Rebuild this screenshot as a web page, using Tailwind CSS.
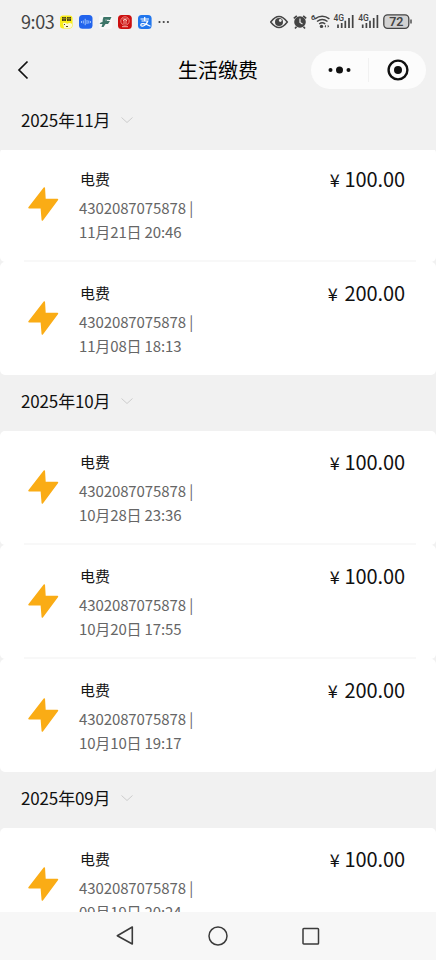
<!DOCTYPE html>
<html lang="zh-CN">
<head>
<meta charset="utf-8">
<title>生活缴费</title>
<script src="https://cdn.jsdelivr.net/npm/@tailwindcss/browser@4"></script>
</head>
<body class="h-[960px] w-[436px] overflow-hidden bg-[#f1f1f1] font-['Noto_Sans_CJK_SC',sans-serif] text-[#111]">
<div class="flex h-[960px] flex-col">
  <header class="shrink-0">
    <div class="flex h-11 items-center justify-between pl-[21px] pr-[23px]">
      <div class="flex items-center">
        <span class="w-[35px] whitespace-nowrap pb-[2px] text-[18px] leading-5 tracking-[-0.4px] text-[#444]">9:03</span>
        <svg class="ml-1 block" width="110" height="14" viewBox="0 0 110 14">
          <rect x="0" y="0.5" width="12.5" height="13" rx="3" fill="#f9ed19"/>
          <path d="M2 2h4v4H2zM7 2h4v4H7z" fill="#494319"/><path d="M2 3.5h9M4 2v4M9 2v4" stroke="#a89b21" stroke-width=".6"/>
          <path d="M3 8q3-1 4 1 3-2 5 0v2q0 2-2 2H4z" fill="#fffbd5"/><path d="M4.5 9v1M6 11.5h2" stroke="#514722"/>
          <rect x="19" y="0" width="13.5" height="13.8" rx="3.5" fill="#2264ed"/>
          <path d="M21.5 6v2M23.3 5.5v3M25.2 3.8v6.400M27 5v4M28.8 5.500v3M30.500 6v2" stroke="#b9d7ff" stroke-width=".8"/>
          <rect x="39" y="0" width="13.5" height="14" rx="3" fill="#f8f8f8"/>
          <path d="M43.500 2h8l-1.500 3h-3v1h3l-2 3h-2.500l-2 3h-2l1-3h-3q1-2 3-2 0-3 1-5z" fill="#3d7568"/><path d="M45 5h4" stroke="#b7d0c9" stroke-width=".6"/>
          <rect x="58" y="0" width="13.8" height="14" rx="3.5" fill="#cc1010"/>
          <circle cx="65" cy="6" r="4.2" fill="none" stroke="#f3a29a" stroke-width=".8"/><path d="M62.5 4h5M63 6l2-2 2 2M64 5v4M66 5v4M62 11.7h6" stroke="#ffd4cc" stroke-width=".8" fill="none"/>
          <rect x="78" y="0" width="13.6" height="14" rx="3.5" fill="#2176ed"/>
          <path d="M80.5 4h8.5M84.7 2v4M81.5 6h6.3q-1.5 4-4.5 5-2.5.6-2.5-1t2.5-1.3q2.700.4 7.200 2.500" stroke="#fff" stroke-width="1.2" fill="none"/>
          <g fill="#444"><circle cx="99.5" cy="7" r="1.1"/><circle cx="103.7" cy="7" r="1.1"/><circle cx="107.9" cy="7" r="1.1"/></g>
        </svg>
      </div>
      <svg class="block" width="143" height="20" viewBox="270 12 143 20" fill="none" stroke="#444">
        <path d="M270.7 22q8.3-11 16.6 0-8.3 11-16.6 0z" stroke-width="1.5"/><circle cx="279" cy="22" r="4" fill="#444" stroke="none"/><circle cx="280.3" cy="20.5" r="1.4" fill="#eee" stroke="none"/>
        <circle cx="300" cy="22" r="5.8" fill="#444" stroke="none"/><path d="M293.8 18.4l3-2.6M306.2 18.4l-3-2.6M296.500 26.8l-1.500 1.800M303.500 26.8l1.500 1.800" stroke-width="1.6"/><path d="M300 18.5v4l2.5 1.4" stroke="#eee" stroke-width="1.2"/>
        <text x="311" y="20" font-family="Roboto,sans-serif" font-size="7.5" font-weight="700" fill="#444" stroke="none">6</text>
        <path d="M315 18.8q7.2-5 14.4 0M317 21.5q5.2-4 10.5 0M319.2 24q3-2.3 6 0" stroke-width="1.5"/><circle cx="321.5" cy="26.4" r="1.7" fill="#444" stroke="none"/><path d="M324.5 26.3l1.5-1.5v3zM329.2 26.3l-1.5-1.500v3z" fill="#444" stroke="none"/>
        <g id="signal"><text x="333.5" y="20.7" font-family="Roboto,sans-serif" font-size="8.500" font-weight="500" fill="#444" stroke="none">4G</text>
        <path d="M338 28v-3.5M341.7 28v-5M345.3 28v-7.3M349 28v-10M352.7 28v-13" stroke-width="1.7"/></g>
        <use href="#signal" x="24.7"/>
        <rect x="383.8" y="14.8" width="25" height="13.5" rx="3.8" fill="#d2d2d2" stroke-width="1.3"/><path d="M411 19.5v4" stroke-width="1.4"/>
        <text x="396.3" y="26" text-anchor="middle" font-family="Roboto,sans-serif" font-size="12.5" font-weight="600" fill="#444" stroke="none">72</text>
      </svg>
    </div>
    <div class="grid h-[50px] grid-cols-[178px_1fr_115px] items-center pr-[10px] pt-[1px]">
      <svg class="ml-[17px] block" width="14" height="20" viewBox="0 0 14 20"><path d="M10.500 1.500L2 10l8.500 8.500" fill="none" stroke="#111" stroke-width="1.7"/></svg>
      <h1 class="whitespace-nowrap text-[20px] font-normal leading-[30px] text-black">生活缴费</h1>
      <div class="flex h-[38px] items-center rounded-full bg-[#fcfcfc]">
        <svg width="115" height="38" viewBox="0 0 115 38"><g fill="#111"><circle cx="19.500" cy="19" r="2"/><circle cx="28.500" cy="19" r="3.500"/><circle cx="37.500" cy="19" r="2"/><circle cx="87" cy="19" r="4"/></g><circle cx="87" cy="19" r="9.400" fill="none" stroke="#111" stroke-width="2.400"/><path d="M57.500 7v24" stroke="#f1f1f1"/></svg>
      </div>
    </div>
  </header>
  <main id="bills" class="min-h-0 flex-1 overflow-hidden"></main>
  <nav class="grid h-12 shrink-0 grid-cols-3 items-center bg-[#f7f7f7] px-[78px]">
    <svg class="justify-self-center" width="20" height="22" viewBox="0 0 20 22"><path d="M17.300 2v17L2.300 10.700z" fill="none" stroke="#3b3b3b" stroke-width="1.600" stroke-linejoin="round"/></svg>
    <svg class="justify-self-center" width="20" height="20" viewBox="0 0 20 20"><circle cx="10" cy="10" r="9" fill="none" stroke="#3b3b3b" stroke-width="1.500"/></svg>
    <svg class="justify-self-center" width="18" height="18" viewBox="0 0 18 18"><rect x="1" y="1.500" width="15.500" height="15.500" rx=".8" fill="none" stroke="#3b3b3b" stroke-width="1.500"/></svg>
  </nav>
</div>
<script>
const months = [
  ['2025年11月', [['11月21日 20:46', '100.00'], ['11月08日 18:13', '200.00']]],
  ['2025年10月', [['10月28日 23:36', '100.00'], ['10月20日 17:55', '100.00'], ['10月10日 19:17', '200.00']]],
  ['2025年09月', [['09月19日 20:24', '100.00']]]
];
const row = ([date, amount]) => `
  <article class="relative flex h-[114px] rounded-[5px] bg-white pr-[31px] pt-5 after:absolute after:bottom-0 after:left-6 after:right-5 after:h-[2px] after:bg-[#f8f8f8] last:h-[113px] last:after:hidden">
    <svg class="ml-[27px] mt-[18px] shrink-0" width="32" height="36" viewBox="0 0 32 36"><path d="M17.300 2L2 21.700h12.300L15.300 34 30.500 13.500H18z" fill="#faac15" stroke="#faac15" stroke-width="1.500" stroke-linejoin="round"/></svg>
    <div class="ml-[20px] whitespace-nowrap text-[15px] text-[#666]">
      <h2 class="ml-[1px] h-[22px] font-normal leading-[22px] text-[#161616]">电费</h2>
      <p class="mt-[6px] leading-6 tracking-[-0.1px]">4302087075878 |</p>
      <p class="leading-6 tracking-[-0.15px]">${date}</p>
    </div>
    <p class="-mt-[1px] ml-auto flex items-baseline whitespace-nowrap text-[20px] leading-6 tracking-[-0.1px]"><span class="text-[18px] ${amount.startsWith('1') ? 'mr-[5px]' : 'mr-[7px]'}">¥</span>${amount}</p>
  </article>`;
document.getElementById('bills').innerHTML = months.map(([title, rows]) => `
  <section class="group">
    <div class="relative z-10 flex h-14 items-center bg-[#f1f1f1] pb-[4px] pl-[21px] text-[17px] leading-6 tracking-[-0.15px] group-first:-mb-[2px]"><span>${title}</span>
      <svg class="ml-[10px]" width="14" height="8" viewBox="0 0 14 8"><path d="M1.500 1.500L7 6.500l5.500-5" fill="none" stroke="#cdcdcd" stroke-width="1"/></svg>
    </div>
    <div>${rows.map(row).join('')}</div>
  </section>`).join('');
</script>
</body>
</html>
